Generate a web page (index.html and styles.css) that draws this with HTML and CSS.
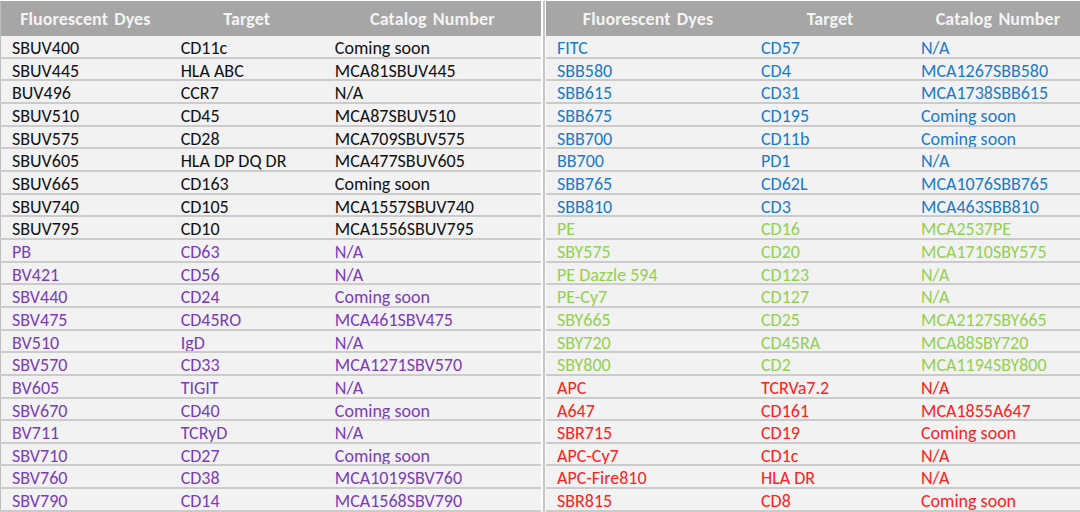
FILE: index.html
```html
<!DOCTYPE html>
<html>
<head>
<meta charset="utf-8">
<link rel="stylesheet" href="styles.css">
</head>
<body>
<div class="wrap">
  <table class="tbl tbl-left">
    <colgroup><col class="c1"><col class="c2"><col class="c3"></colgroup>
    <thead><tr><th>Fluorescent Dyes</th><th>Target</th><th>Catalog Number</th></tr></thead>
    <tbody>
      <tr class="k"><td>SBUV400</td><td>CD11c</td><td>Coming soon</td></tr>
      <tr class="k"><td>SBUV445</td><td>HLA ABC</td><td>MCA81SBUV445</td></tr>
      <tr class="k"><td>BUV496</td><td>CCR7</td><td>N/A</td></tr>
      <tr class="k"><td>SBUV510</td><td>CD45</td><td>MCA87SBUV510</td></tr>
      <tr class="k"><td>SBUV575</td><td>CD28</td><td>MCA709SBUV575</td></tr>
      <tr class="k"><td>SBUV605</td><td>HLA DP DQ DR</td><td>MCA477SBUV605</td></tr>
      <tr class="k"><td>SBUV665</td><td>CD163</td><td>Coming soon</td></tr>
      <tr class="k"><td>SBUV740</td><td>CD105</td><td>MCA1557SBUV740</td></tr>
      <tr class="k"><td>SBUV795</td><td>CD10</td><td>MCA1556SBUV795</td></tr>
      <tr class="p"><td>PB</td><td>CD63</td><td>N/A</td></tr>
      <tr class="p"><td>BV421</td><td>CD56</td><td>N/A</td></tr>
      <tr class="p"><td>SBV440</td><td>CD24</td><td>Coming soon</td></tr>
      <tr class="p"><td>SBV475</td><td>CD45RO</td><td>MCA461SBV475</td></tr>
      <tr class="p"><td>BV510</td><td>IgD</td><td>N/A</td></tr>
      <tr class="p"><td>SBV570</td><td>CD33</td><td>MCA1271SBV570</td></tr>
      <tr class="p"><td>BV605</td><td>TIGIT</td><td>N/A</td></tr>
      <tr class="p"><td>SBV670</td><td>CD40</td><td>Coming soon</td></tr>
      <tr class="p"><td>BV711</td><td>TCRyD</td><td>N/A</td></tr>
      <tr class="p"><td>SBV710</td><td>CD27</td><td>Coming soon</td></tr>
      <tr class="p"><td>SBV760</td><td>CD38</td><td>MCA1019SBV760</td></tr>
      <tr class="p"><td>SBV790</td><td>CD14</td><td>MCA1568SBV790</td></tr>
    </tbody>
  </table>
  <div class="divider"></div>
  <table class="tbl tbl-right">
    <colgroup><col class="r1"><col class="r2"><col class="r3"></colgroup>
    <thead><tr><th>Fluorescent Dyes</th><th>Target</th><th class="shift">Catalog Number</th></tr></thead>
    <tbody>
      <tr class="b"><td>FITC</td><td>CD57</td><td>N/A</td></tr>
      <tr class="b"><td>SBB580</td><td>CD4</td><td>MCA1267SBB580</td></tr>
      <tr class="b"><td>SBB615</td><td>CD31</td><td>MCA1738SBB615</td></tr>
      <tr class="b"><td>SBB675</td><td>CD195</td><td>Coming soon</td></tr>
      <tr class="b"><td>SBB700</td><td>CD11b</td><td>Coming soon</td></tr>
      <tr class="b"><td>BB700</td><td>PD1</td><td>N/A</td></tr>
      <tr class="b"><td>SBB765</td><td>CD62L</td><td>MCA1076SBB765</td></tr>
      <tr class="b"><td>SBB810</td><td>CD3</td><td>MCA463SBB810</td></tr>
      <tr class="g"><td>PE</td><td>CD16</td><td>MCA2537PE</td></tr>
      <tr class="g"><td>SBY575</td><td>CD20</td><td>MCA1710SBY575</td></tr>
      <tr class="g"><td>PE Dazzle 594</td><td>CD123</td><td>N/A</td></tr>
      <tr class="g"><td>PE-Cy7</td><td>CD127</td><td>N/A</td></tr>
      <tr class="g"><td>SBY665</td><td>CD25</td><td>MCA2127SBY665</td></tr>
      <tr class="g"><td>SBY720</td><td>CD45RA</td><td>MCA88SBY720</td></tr>
      <tr class="g"><td>SBY800</td><td>CD2</td><td>MCA1194SBY800</td></tr>
      <tr class="r"><td>APC</td><td>TCRVa7.2</td><td>N/A</td></tr>
      <tr class="r"><td>A647</td><td>CD161</td><td>MCA1855A647</td></tr>
      <tr class="r"><td>SBR715</td><td>CD19</td><td>Coming soon</td></tr>
      <tr class="r"><td>APC-Cy7</td><td>CD1c</td><td>N/A</td></tr>
      <tr class="r"><td>APC-Fire810</td><td>HLA DR</td><td>N/A</td></tr>
      <tr class="r"><td>SBR815</td><td>CD8</td><td>Coming soon</td></tr>
    </tbody>
  </table>
</div>
</body>
</html>
```
FILE: styles.css
```css
html, body {
  margin: 0;
  padding: 0;
  background: #ffffff;
  overflow: hidden;
  width: 1080px;
  height: 512px;
}
body {
  font-family: Carlito, "Open Sans", "Liberation Sans", sans-serif;
}
.wrap {
  display: flex;
  align-items: flex-start;
  padding-top: 1px;
  width: 1080px;
}
.tbl {
  border-collapse: collapse;
  table-layout: fixed;
  flex: none;
  background: #f2f2f2;
}
.tbl-left {
  width: 541px;
  border-left: 1px solid #bdbdbd;
}
.tbl-right {
  width: 534px;
}
.c1 { width: 169px; }
.c2 { width: 154px; }
.c3 { width: 217px; }
.r1 { width: 204px; }
.r2 { width: 160px; }
.r3 { width: 170px; }
.divider {
  flex: none;
  width: 5px;
  height: 512px;
  display: flex;
  justify-content: center;
}
.divider::before {
  content: "";
  width: 2px;
  height: 100%;
  background: #c4c4c4;
}
th {
  height: 35px;
  padding: 0;
  background: #a6a6a6;
  color: #f4f4f4;
  font-size: 18px;
  font-weight: bold;
  text-align: center;
  vertical-align: middle;
  letter-spacing: 0.1px;
  word-spacing: 2px;
}
th.shift {
  padding-left: 6px;
}
td {
  height: 15.67px;
  padding: 5px 4px 0 11px;
  font-size: 18px;
  line-height: 15px;
  white-space: nowrap;
  overflow: hidden;
  border-bottom: 2px solid #cbcbcb;
  vertical-align: top;
}
.k td { color: #111111; }
.p td { color: #7a3db5; }
.b td { color: #1a7ac8; }
.g td { color: #92d050; }
.r td { color: #ff2020; }
```
